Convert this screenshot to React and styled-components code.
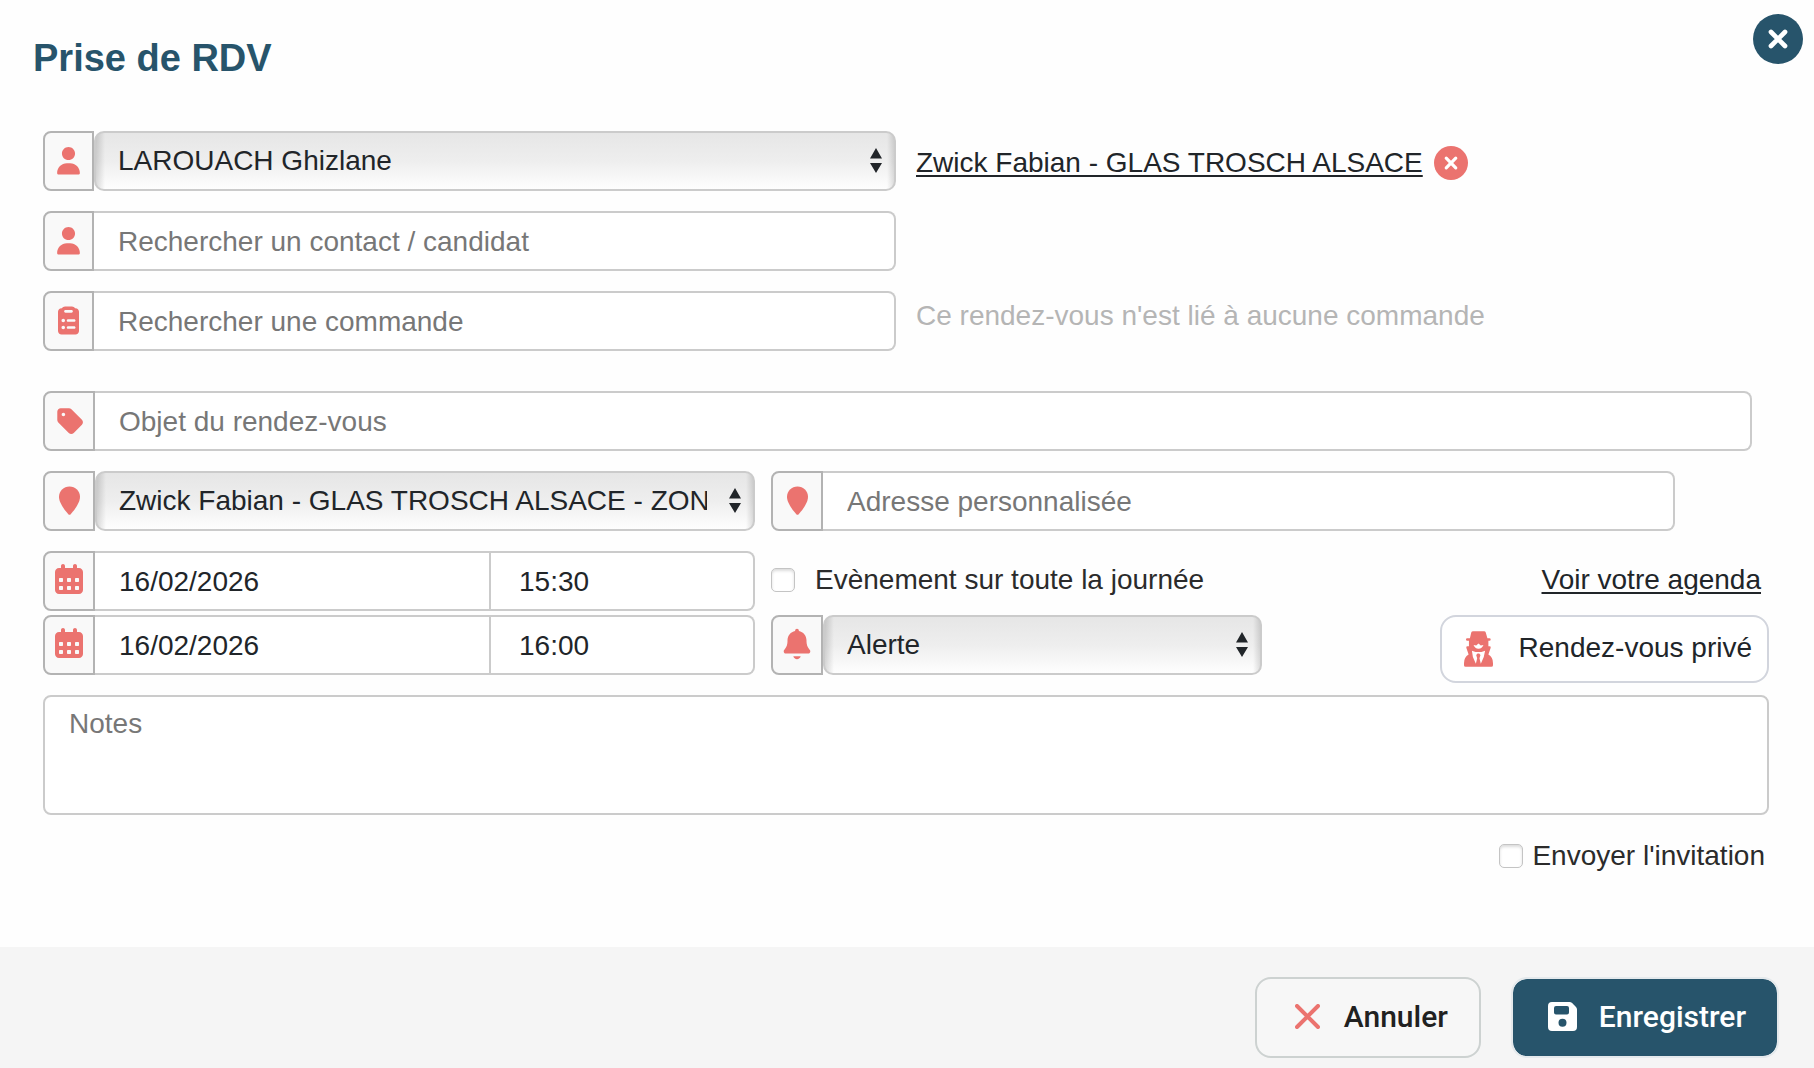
import React, {useState} from 'react';
import styled, {createGlobalStyle} from "styled-components";

const GlobalStyle = createGlobalStyle`
    * {
        box-sizing: border-box;
    }

    body {
        margin: 0;
        background-color: #fefefe;
        color: #212529;
        font-family: "Liberation Sans", Arial, sans-serif;
        font-size: 28px;
        line-height: 32px;
    }

    button, input, select, textarea {
        margin: 0;
        font: inherit;
        color: inherit;
    }
`;

const Page = styled.div`
    min-height: 100vh;
    display: flex;
    flex-direction: column;
`;

const Header = styled.header`
    display: flex;
    justify-content: space-between;
    align-items: flex-start;
    padding: 14px 11px 0 33px;
    height: 131px;
`;

const Title = styled.h1`
    margin: 22px 0 0;
    font-size: 38px;
    line-height: 44px;
    color: #27546b;
`;

const IconButton = styled.button`
    display: flex;
    padding: 0;
    border: none;
    background: none;
    cursor: pointer;
    color: ${props => props.$color};
`;

const Form = styled.form`
    flex: 1;
    display: flex;
    flex-direction: column;
    padding: 0 45px 0 43px;
`;

const HalfRow = styled.div`
    display: grid;
    grid-template-columns: 1fr 1fr;
    gap: 20px;
    margin-bottom: ${props => props.$last ? "40px" : "20px"};
`;

const FullRow = styled.div`
    margin: 0 17px 20px 0;
`;

const SplitRow = styled.div`
    display: grid;
    grid-template-columns: minmax(0, 356fr) minmax(0, 499fr);
    align-items: start;
    gap: 16px;
    margin-bottom: ${props => props.$space}px;
`;

const AddressBox = styled.div`
    margin-right: 94px;
`;

const AlertRow = styled.div`
    display: grid;
    grid-template-columns: 1fr 1fr;
    align-items: start;
    gap: 16px;
`;

const Side = styled.div`
    display: flex;
    align-items: center;
    gap: 11px;
    padding: ${props => props.$raised ? "0 0 10px" : "4px 0 0"};
`;

const Muted = styled.span`
    color: #b5b5b5;
`;

const Link = styled.a`
    color: #212529;
    text-decoration: underline;
    text-decoration-thickness: 2px;
    text-underline-offset: 3px;
`;

const InputGroup = styled.div`
    display: flex;
    height: 60px;
`;

const Addon = styled.label`
    flex: none;
    display: flex;
    align-items: center;
    justify-content: center;
    width: ${props => props.$narrow ? "51px" : "52px"};
    padding-bottom: 2px;
    border: 2px solid #b3b3b3;
    border-radius: 8px 0 0 8px;
    background-color: #f9f9f9;
    color: #eb736f;
`;

const TextInput = styled.input`
    flex: 1;
    min-width: 0;
    padding: 2px 24px 0;
    border: 2px solid #cbcbcb;
    border-left: none;
    border-radius: ${props => props.$inner ? "0" : "0 8px 8px 0"};
    background-color: #fff;
    outline: none;

    &::placeholder {
        color: #777;
        opacity: 1;
    }
`;

const DateFields = styled.div`
    flex: 1;
    display: grid;
    grid-template-columns: minmax(0, 3fr) minmax(0, 2fr);
`;

const TimeInput = styled(TextInput)`
    padding-left: 28px;
`;

const SelectWrap = styled.div`
    position: relative;
    flex: 1;
    min-width: 0;
`;

const Select = styled.select`
    appearance: none;
    width: 100%;
    height: 60px;
    padding: 0 46px 0 22px;
    border: 2px solid #cbcbcb;
    border-radius: 10px;
    background:
        linear-gradient(to right, rgba(0, 0, 0, .14), transparent 9px),
        linear-gradient(to left, rgba(0, 0, 0, .12), transparent 7px),
        linear-gradient(#e6e6e6, #eee 50%, #fefefe);
    outline: none;
`;

const Arrows = styled.svg`
    position: absolute;
    top: 17px;
    right: 14px;
    pointer-events: none;
`;

const CheckLine = styled.div`
    display: flex;
    align-items: center;
    padding-bottom: 3px;
    height: 60px;
`;

const CheckLabel = styled.label`
    margin-left: ${props => props.$gap}px;
    color: #2b2b2b;
`;

const Checkbox = styled.input`
    appearance: none;
    width: 24px;
    height: 24px;
    border: 1px solid #c4c4c4;
    border-radius: 5px;
    background-color: #fff;
    box-shadow: inset 0 2px 3px rgba(0, 0, 0, .14);

    &:checked {
        background-color: #eb736f;
    }
`;

const AgendaLink = styled(Link)`
    margin-left: auto;
    margin-right: 8px;
`;

const PrivateButton = styled.button`
    display: flex;
    align-items: center;
    justify-self: end;
    gap: 26px;
    height: 68px;
    padding: 0 15px 0 22px;
    border: 2px solid #d2d5dd;
    border-radius: 16px;
    background-color: #fff;
    cursor: pointer;

    span {
        padding-bottom: 3px;
    }
`;

const Notes = styled.textarea`
    display: block;
    width: 100%;
    height: 120px;
    padding: 11px 24px;
    border: 2px solid #cbcbcb;
    border-radius: 8px;
    background-color: #fff;
    outline: none;
    resize: none;

    &::placeholder {
        color: #777;
        opacity: 1;
    }
`;

const InviteLine = styled.div`
    display: flex;
    align-items: center;
    justify-content: flex-end;
    margin: 25px 4px 50px 0;
`;

const Footer = styled.footer`
    display: flex;
    justify-content: flex-end;
    gap: 30px;
    padding: 30px 35px 10px;
    background-color: #f5f5f5;
`;

const FooterButton = styled.button`
    display: flex;
    align-items: center;
    gap: ${props => props.$primary ? "22px" : "24px"};
    height: 81px;
    padding: 0 31px 2px ${props => props.$primary ? "35px" : "38px"};
    border: 2px solid ${props => props.$primary ? "#e4e9ec" : "#cdd2d1"};
    border-radius: 16px;
    background-color: ${props => props.$primary ? "#27546b" : "#f7f7f7"};
    background-clip: padding-box;
    color: ${props => props.$primary ? "#fff" : "#212121"};
    font-family: Roboto, sans-serif;
    font-size: 30px;
    font-weight: 500;
    cursor: pointer;
`;

const icons = {
    user: "M320 312C386.3 312 440 258.3 440 192C440 125.7 386.3 72 320 72C253.7 72 200 125.7 200 192C200 258.3 253.7 312 320 312zM290.3 368C191.8 368 112 447.8 112 546.3C112 562.7 125.3 576 141.7 576L498.3 576C514.7 576 528 562.7 528 546.3C528 447.8 448.2 368 349.7 368L290.3 368z",
    clipboard: "M439.4 96L448 96C483.3 96 512 124.7 512 160L512 512C512 547.3 483.3 576 448 576L192 576C156.7 576 128 547.3 128 512L128 160C128 124.7 156.7 96 192 96L200.6 96C211.7 76.9 232.4 64 256 64L384 64C407.6 64 428.3 76.9 439.4 96zM376 176C389.3 176 400 165.3 400 152C400 138.7 389.3 128 376 128L264 128C250.7 128 240 138.7 240 152C240 165.3 250.7 176 264 176L376 176zM256 320C256 302.3 241.7 288 224 288C206.3 288 192 302.3 192 320C192 337.7 206.3 352 224 352C241.7 352 256 337.7 256 320zM288 320C288 333.3 298.7 344 312 344L424 344C437.3 344 448 333.3 448 320C448 306.7 437.3 296 424 296L312 296C298.7 296 288 306.7 288 320zM288 448C288 461.3 298.7 472 312 472L424 472C437.3 472 448 461.3 448 448C448 434.7 437.3 424 424 424L312 424C298.7 424 288 434.7 288 448zM224 480C241.7 480 256 465.7 256 448C256 430.3 241.7 416 224 416C206.3 416 192 430.3 192 448C192 465.7 206.3 480 224 480z",
    tag: "M96.5 160L96.5 309.5C96.5 326.5 103.2 342.8 115.2 354.8L307.2 546.8C332.2 571.8 372.7 571.8 397.7 546.8L547.2 397.3C572.2 372.3 572.2 331.8 547.2 306.8L355.2 114.8C343.2 102.7 327 96 310 96L160.5 96C125.2 96 96.5 124.7 96.5 160zM208.5 176C226.2 176 240.5 190.3 240.5 208C240.5 225.7 226.2 240 208.5 240C190.8 240 176.5 225.7 176.5 208C176.5 190.3 190.8 176 208.5 176z",
    pin: "M128 252.6C128 148.4 214 64 320 64C426 64 512 148.4 512 252.6C512 371.9 391.8 514.9 341.6 569.4C329.8 582.2 310.1 582.2 298.3 569.4C248.1 514.9 128 371.9 128 252.6z",
    calendar: "M224 64C241.7 64 256 78.3 256 96L256 128L384 128L384 96C384 78.3 398.3 64 416 64C433.7 64 448 78.3 448 96L448 128L480 128C515.3 128 544 156.7 544 192L544 480C544 515.3 515.3 544 480 544L160 544C124.7 544 96 515.3 96 480L96 192C96 156.7 124.7 128 160 128L192 128L192 96C192 78.3 206.3 64 224 64z"
        + [160, 288, 416].map(x => [288, 416].map(y => `M${x + 12} ${y}h40q12 0 12 12v40q0 12-12 12h-40q-12 0-12-12v-40q0-12 12-12z`).join("")).join(""),
    bell: "M320 64C302.3 64 288 78.3 288 96L288 99.2C215 114 160 178.6 160 256L160 277.7C160 325.8 143.6 372.5 113.6 410.1L103.8 422.3C98.7 428.6 96 436.4 96 444.5C96 464.1 111.9 480 131.5 480L508.4 480C528 480 543.9 464.1 543.9 444.5C543.9 436.4 541.2 428.6 536.1 422.3L526.3 410.1C496.4 372.5 480 325.8 480 277.7L480 256C480 178.6 425 114 352 99.2L352 96C352 78.3 337.7 64 320 64zM258 528C265.1 555.6 290.2 576 320 576C349.8 576 374.9 555.6 382 528L258 528z"
};

function Icon({name, size = 35}) {
    return (
        <svg width={size} height={size} viewBox="0 0 640 640" fill="currentColor" fillRule="evenodd" aria-hidden="true">
            <path d={icons[name]} />
        </svg>
    );
}

function CircleCross({size}) {
    return (
        <svg width={size} height={size} viewBox="0 0 50 50" aria-hidden="true">
            <circle cx="25" cy="25" r="25" fill="currentColor" />
            <path d="M18 18l14 14M32 18l-14 14" stroke="#fff" strokeWidth="4.7" strokeLinecap="round" />
        </svg>
    );
}

function SecretIcon() {
    return (
        <svg width="29" height="36" viewBox="0 0 88 108" aria-hidden="true">
            <path fill="#eb736f" d="M28 0h33q4 0 5 4l5 17h6q4 0 4 4t-4 4h-3v17h3q5 0 4 4l-7 21q14 8 14 26v6q0 5-5 5H5q-5 0-5-5v-6q0-18 14-26L7 50q-1-4 4-4h4V29h-5q-4 0-4-4t4-4h8l4-17q1-4 6-4z" />
            <path fill="#fff" d="M29 42l8 1 7-6 7 6 8-1q-4 11-15 11T29 42z" />
            <path fill="#fff" d="M24 59l11 4h18l11-4-4 19-9 21-4-17 3-10-4-4h-5l-4 4 3 10-4 17-9-21z" />
        </svg>
    );
}

function SaveIcon() {
    return (
        <svg width="29" height="29" viewBox="0 0 29 29" fill="#fff" fillRule="evenodd" aria-hidden="true">
            <path d="M4 0h17.500q1.500 0 2.600 1l3.900 3.900q1 1 1 2.600V25q0 4-4 4H4q-4 0-4-4V4q0-4 4-4zM8 4q-2 0-2 2v4.500q0 2 2 2h11q2 0 2-2V6q0-2-2-2zM14.500 16.700a4 4 0 1 0 0 8a4 4 0 1 0 0-8z" />
        </svg>
    );
}

function SelectBox({id, label, options}) {
    return (
        <SelectWrap>
            <Select id={id} aria-label={label}>
                {options.map(option => <option key={option}>{option}</option>)}
            </Select>
            <Arrows width="12" height="25" viewBox="0 0 12 25" fill="#212529" aria-hidden="true">
                <path d="M6 0l6 10.500H0zM6 25L0 15h12z" />
            </Arrows>
        </SelectWrap>
    );
}

function DateGroup({id, label, defaultDate, defaultTime}) {
    const [date, setDate] = useState(defaultDate);
    const [time, setTime] = useState(defaultTime);

    return (
        <InputGroup>
            <Addon htmlFor={id}><Icon name="calendar" size={40} /></Addon>
            <DateFields>
                <TextInput id={id} aria-label={`Date de ${label}`} $inner value={date} onChange={e => setDate(e.target.value)} />
                <TimeInput aria-label={`Heure de ${label}`} value={time} onChange={e => setTime(e.target.value)} />
            </DateFields>
        </InputGroup>
    );
}

function App() {
    const [linked, setLinked] = useState(true);

    return (
        <Page>
            <GlobalStyle />
            <Header>
                <Title>Prise de RDV</Title>
                <IconButton type="button" $color="#27546b" aria-label="Fermer"><CircleCross size={50} /></IconButton>
            </Header>
            <Form id="rdv" onSubmit={e => e.preventDefault()}>
                <HalfRow>
                    <InputGroup>
                        <Addon $narrow htmlFor="user"><Icon name="user" /></Addon>
                        <SelectBox id="user" label="Utilisateur" options={["LAROUACH Ghizlane"]} />
                    </InputGroup>
                    {linked && (
                        <Side>
                            <Link href="#contact">Zwick Fabian - GLAS TROSCH ALSACE</Link>
                            <IconButton type="button" $color="#eb736f" aria-label="Retirer" onClick={() => setLinked(false)}>
                                <CircleCross size={34} />
                            </IconButton>
                        </Side>
                    )}
                </HalfRow>
                <HalfRow>
                    <InputGroup>
                        <Addon $narrow htmlFor="contact"><Icon name="user" /></Addon>
                        <TextInput id="contact" aria-label="Contact" placeholder="Rechercher un contact / candidat" />
                    </InputGroup>
                </HalfRow>
                <HalfRow $last>
                    <InputGroup>
                        <Addon $narrow htmlFor="order"><Icon name="clipboard" /></Addon>
                        <TextInput id="order" aria-label="Commande" placeholder="Rechercher une commande" />
                    </InputGroup>
                    <Side $raised>
                        <Muted>Ce rendez-vous n'est lié à aucune commande</Muted>
                    </Side>
                </HalfRow>
                <FullRow>
                    <InputGroup>
                        <Addon htmlFor="subject"><Icon name="tag" /></Addon>
                        <TextInput id="subject" aria-label="Objet" placeholder="Objet du rendez-vous" />
                    </InputGroup>
                </FullRow>
                <SplitRow $space={20}>
                    <InputGroup>
                        <Addon htmlFor="place"><Icon name="pin" /></Addon>
                        <SelectBox id="place" label="Lieu" options={["Zwick Fabian - GLAS TROSCH ALSACE - ZONE"]} />
                    </InputGroup>
                    <AddressBox>
                        <InputGroup>
                            <Addon htmlFor="address"><Icon name="pin" /></Addon>
                            <TextInput id="address" aria-label="Adresse" placeholder="Adresse personnalisée" />
                        </InputGroup>
                    </AddressBox>
                </SplitRow>
                <SplitRow $space={4}>
                    <DateGroup id="start" label="début" defaultDate="16/02/2026" defaultTime="15:30" />
                    <CheckLine>
                        <Checkbox type="checkbox" id="all-day" />
                        <CheckLabel htmlFor="all-day" $gap={20}>Evènement sur toute la journée</CheckLabel>
                        <AgendaLink href="#agenda">Voir votre agenda</AgendaLink>
                    </CheckLine>
                </SplitRow>
                <SplitRow $space={12}>
                    <DateGroup id="end" label="fin" defaultDate="16/02/2026" defaultTime="16:00" />
                    <AlertRow>
                        <InputGroup>
                            <Addon htmlFor="alert"><Icon name="bell" size={38} /></Addon>
                            <SelectBox id="alert" label="Alerte" options={["Alerte"]} />
                        </InputGroup>
                        <PrivateButton type="button">
                            <SecretIcon />
                            <span>Rendez-vous privé</span>
                        </PrivateButton>
                    </AlertRow>
                </SplitRow>
                <Notes aria-label="Notes" placeholder="Notes" />
                <InviteLine>
                    <Checkbox type="checkbox" id="invite" />
                    <CheckLabel htmlFor="invite" $gap={9}>Envoyer l'invitation</CheckLabel>
                </InviteLine>
            </Form>
            <Footer>
                <FooterButton type="button">
                    <svg width="25" height="25" viewBox="0 0 25 25" aria-hidden="true">
                        <path d="M2 2l21 21M23 2L2 23" stroke="#eb736f" strokeWidth="4" strokeLinecap="round" />
                    </svg>
                    Annuler
                </FooterButton>
                <FooterButton type="submit" form="rdv" $primary>
                    <SaveIcon />
                    Enregistrer
                </FooterButton>
            </Footer>
        </Page>
    );
}

export default App;
